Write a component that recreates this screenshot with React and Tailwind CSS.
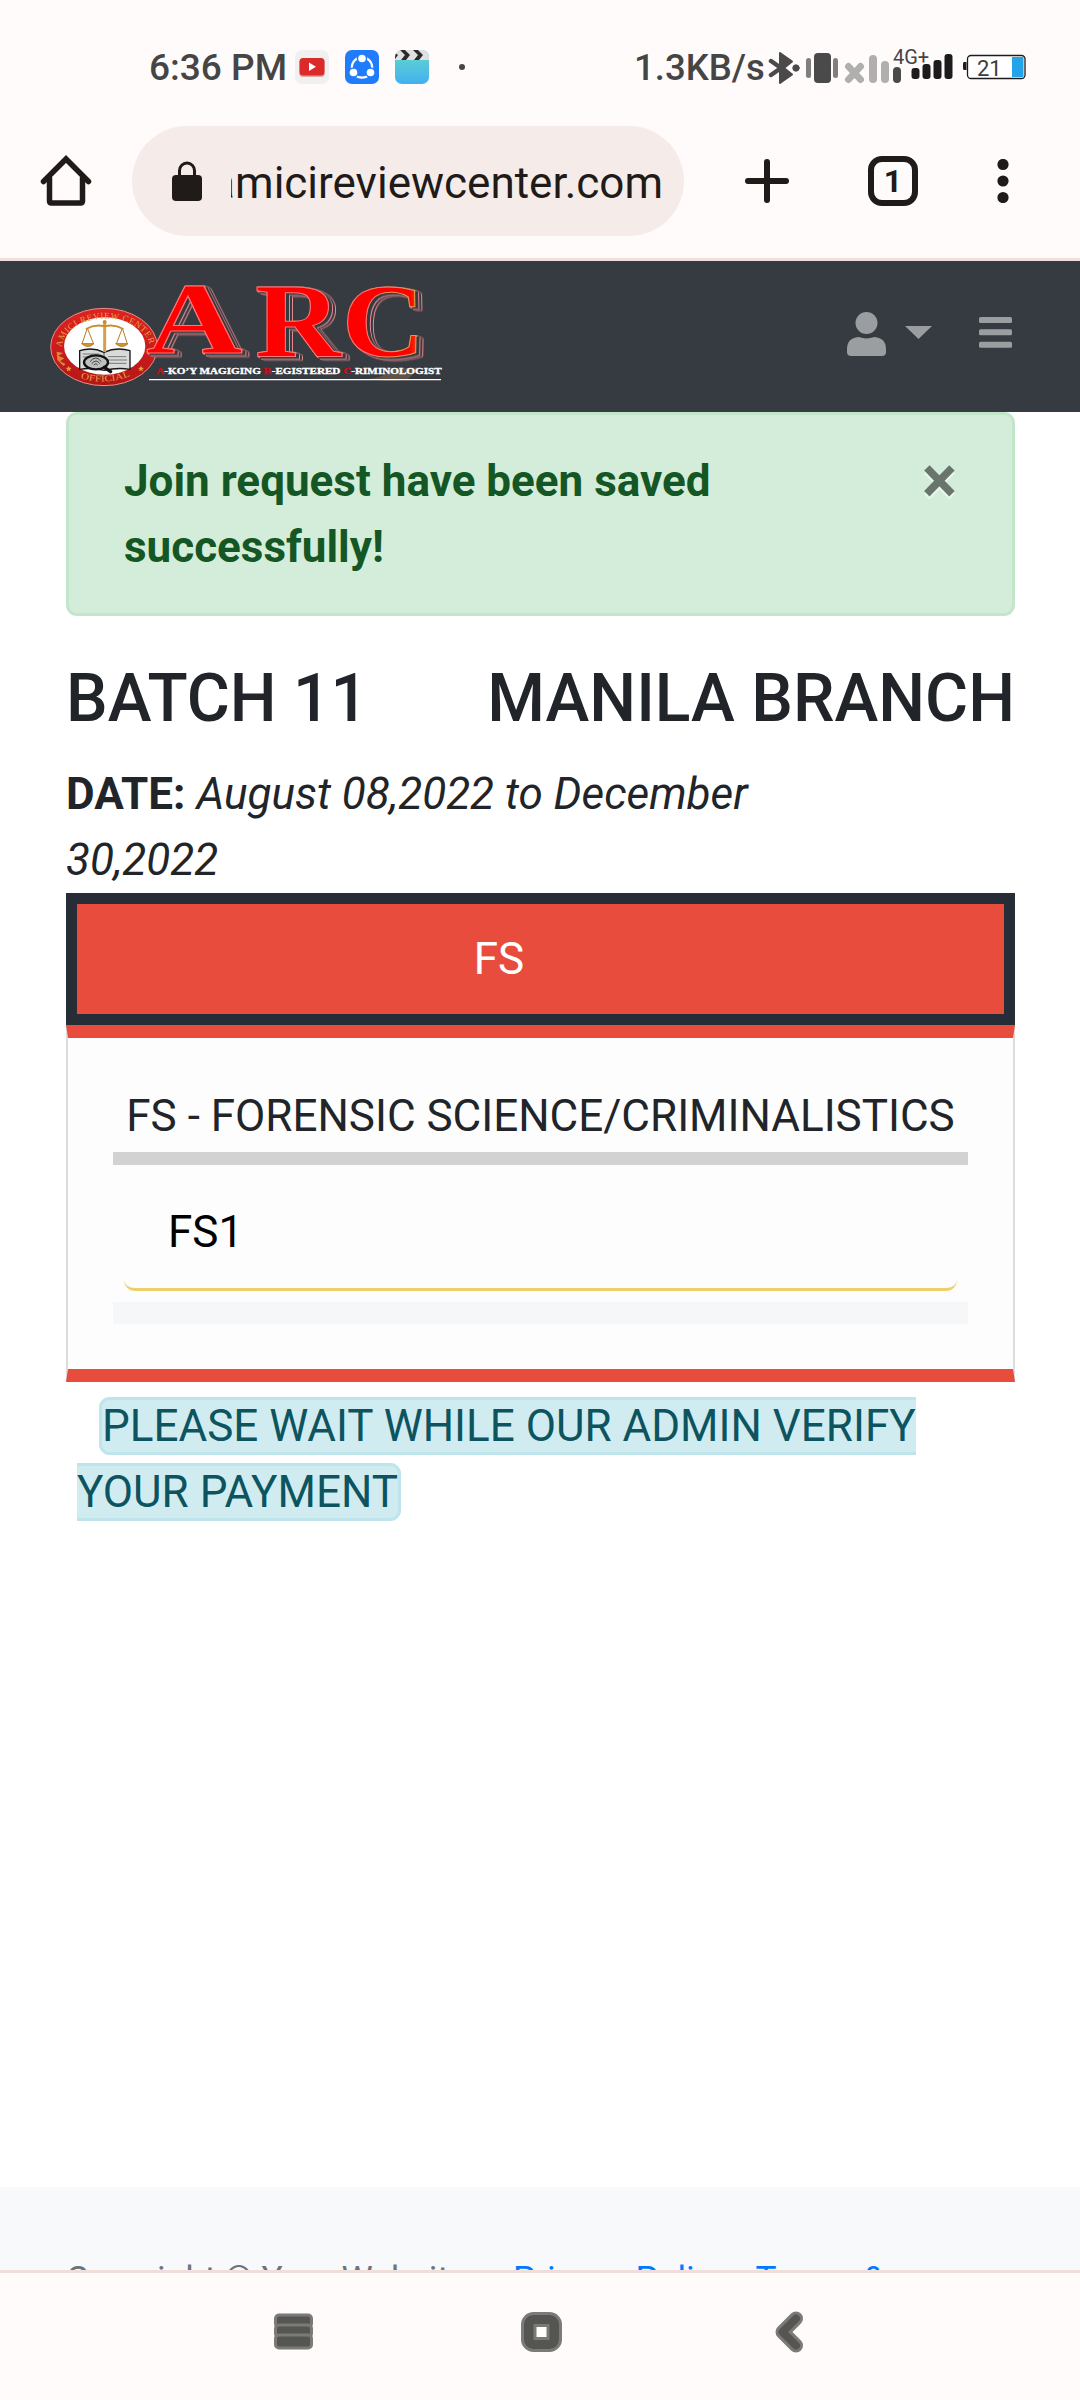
import React from "react";

function StatusBar() {
  return (
    <div className="flex h-[110px] shrink-0 items-start pt-[42px] text-[#454545]">
      <div className="ml-[149px] w-[146px] whitespace-nowrap text-[37px] font-medium leading-[52px]">6:36 PM</div>
      <svg className="mt-2 h-[34px] w-[34px]" viewBox="0 0 34 34">
        <rect width="34" height="34" rx="7" fill="#f1f0f0" />
        <rect x="4.5" y="9" width="25" height="18" rx="3.5" fill="#b3201f" opacity=".35" />
        <rect x="4.5" y="8" width="25" height="17.5" rx="3.5" fill="#db2a2a" />
        <path d="M14 12.5v8.500l7-4.300z" fill="#fff" />
      </svg>
      <svg className="ml-4 mt-2 h-[34px] w-[34px]" viewBox="0 0 34 34">
        <rect width="34" height="34" rx="7" fill="#217cfb" />
        <circle cx="17" cy="17.5" r="10.2" fill="none" stroke="#fff" strokeWidth="2.2" />
        <circle cx="17" cy="8.5" r="5.2" fill="#217cfb" />
        <circle cx="8.500" cy="22.500" r="5.2" fill="#217cfb" />
        <circle cx="25.500" cy="22.500" r="5.2" fill="#217cfb" />
        <circle cx="17" cy="8.500" r="3.800" fill="#fff" />
        <circle cx="8.500" cy="22.500" r="3.800" fill="#fff" />
        <circle cx="25.500" cy="22.500" r="3.800" fill="#fff" />
      </svg>
      <svg className="ml-4 mt-2 h-[34px] w-[34px]" viewBox="0 0 34 34">
        <defs>
          <linearGradient id="film" x2="0" y2="1"><stop stopColor="#66d8cb" /><stop offset="1" stopColor="#42b0ef" /></linearGradient>
          <clipPath id="clap"><rect width="34" height="34" rx="7" /></clipPath>
        </defs>
        <g clipPath="url(#clap)">
          <rect width="34" height="34" fill="url(#film)" />
          <rect width="34" height="10" fill="#e0e0e0" />
          <path d="M0 3l3 2-3 4zM5 0h5l5 5-4 5H6l4-5zM18 0h5l5 5-4 5h-5l4-5zM31 0h3v4z" fill="#2a2a2a" />
        </g>
      </svg>
      <svg className="ml-[30px] mt-[22px] h-[6px] w-[6px]" viewBox="0 0 6 6"><circle cx="3" cy="3" r="3" fill="#454545" /></svg>
      <div className="ml-[169px] w-[134px] whitespace-nowrap text-[36.5px] font-medium leading-[52px]">1.3KB/s</div>
      <svg className="mt-[7px] h-[38px] w-[262px] font-[Roboto]" viewBox="0 0 262 38">
        <g fill="#4a4a4a" stroke="#4a4a4a" strokeLinejoin="round" strokeLinecap="round">
          <path d="M12 4l12 8.500-8 6.500 8 6.500L12 34z" strokeWidth="2" />
          <path d="M3 12l10 7-10 7" strokeWidth="4.500" fill="none" />
          <circle cx="28" cy="19" r="3.200" strokeWidth="1" />
        </g>
        <g fill="#4a4a4a">
          <rect x="46" y="4" width="17" height="30" rx="4" />
          <rect x="38" y="9" width="5" height="20" rx="2.500" opacity=".7" />
          <rect x="65" y="9" width="5" height="20" rx="2.500" opacity=".7" />
        </g>
        <path d="M80.500 17.500l12 13m0-13l-12 13" stroke="#b0afad" strokeWidth="7" strokeLinecap="round" />
        <rect x="101" y="6" width="8" height="28" rx="4" fill="#b0afad" />
        <rect x="113" y="12" width="8" height="22" rx="4" fill="#b0afad" />
        <rect x="125" y="18" width="8" height="16" rx="4" fill="#4a4a4a" />
        <g fill="#1c1c1c">
          <rect x="143.500" y="19" width="8" height="11" rx="3" />
          <rect x="154.500" y="15" width="8" height="15" rx="3" />
          <rect x="165.500" y="11" width="8" height="19" rx="3" />
          <rect x="176.500" y="5" width="8" height="25" rx="3" />
          <path d="M198.500 13h-2.500q-1 0-1 2v4q0 2 1 2h2.500z" />
        </g>
        <text x="125" y="15" fontSize="20" fill="#454545">4G+</text>
        <rect x="199.500" y="6.500" width="57.500" height="23" rx="3.500" fill="#fff" stroke="#1c1c1c" strokeWidth="1.300" />
        <rect x="244" y="8" width="11.500" height="20" fill="#24a4e8" />
        <text x="209" y="26.500" fontSize="22" fill="#3c3c3c">21</text>
      </svg>
    </div>
  );
}

function BrowserBar() {
  return (
    <div className="flex h-[151px] shrink-0 items-start border-b-[3px] border-[#f1dfda] pt-4 text-[#201a19]">
      <svg className="ml-[38px] mt-[27px] h-14 w-14" viewBox="0 0 56 56" fill="none" stroke="currentColor" strokeWidth="5.500" strokeLinecap="round">
        <path d="M5.500 28.500L28 6l22.500 22.500" strokeLinejoin="miter" />
        <path d="M11.500 25v23q0 2 2 2h29q2 0 2-2V25" />
      </svg>
      <div className="ml-[38px] flex h-[110px] w-[552px] items-center rounded-full bg-[#f5ecea]">
        <svg className="ml-10 h-[40px] w-[30px]" viewBox="0 0 30 40">
          <rect y="14" width="30" height="26" rx="4" fill="currentColor" />
          <path d="M7.500 15V9.500a7.500 7.500 0 0 1 15 0V15" fill="none" stroke="currentColor" strokeWidth="3" />
        </svg>
        <div className="ml-[29px] flex w-[432px] justify-end overflow-hidden pt-[3px]">
          <span className="whitespace-nowrap text-[44px] leading-[60px]">amicireviewcenter.com</span>
        </div>
      </div>
      <svg className="ml-[61px] mt-[33px] h-11 w-11" viewBox="0 0 44 44"><path d="M22 3v38M3 22h38" stroke="currentColor" strokeWidth="6" strokeLinecap="round" /></svg>
      <div className="ml-[79px] mt-[30px] flex h-[50px] w-[50px] items-center justify-center rounded-[14px] border-[6px] border-[#201a19] text-[32px] font-bold leading-none">1</div>
      <svg className="ml-[79px] mt-[33px] h-11 w-3" viewBox="0 0 12 44" fill="currentColor"><circle cx="6" cy="5.500" r="5.600" /><circle cx="6" cy="22" r="5.600" /><circle cx="6" cy="38.500" r="5.600" /></svg>
    </div>
  );
}

const BIG_LETTERS = [
  { c: "A", x: 318, y: 278, w: 290, s: 304, fill: "#fe0000", stroke: "#ff7676" },
  { c: "R", x: 645, y: 287, w: 258, s: 316, fill: "#fe0000", stroke: "#ff7676" },
  { c: "C", x: 906, y: 288, w: 248, s: 308, fill: "url(#letterC)", stroke: "url(#edgeC)" },
];

function Logo() {
  return (
    <svg className="h-[150px] w-[420px]" viewBox="0 0 1260 450">
      <defs>
        <path id="ringTop" d="M66 262a128 84 0 0 1 262 0" />
        <path id="ringBottom" d="M118 353Q194 379 272 347" />
        <linearGradient id="red" x2="0" y2="1"><stop stopColor="#e02222" /><stop offset="1" stopColor="#b51616" /></linearGradient>
        <linearGradient id="letterC"><stop offset=".82" stopColor="#fe0000" /><stop offset="1" stopColor="#dc7a18" /></linearGradient>
        <linearGradient id="edgeC"><stop offset=".3" stopColor="#ff7676" /><stop offset=".7" stopColor="#e29a4c" /></linearGradient>
      </defs>
      <ellipse cx="192" cy="261" rx="160" ry="116" fill="url(#red)" stroke="#e98f88" strokeWidth="3" />
      <ellipse cx="194" cy="258" rx="122" ry="86" fill="#fff" />
      <g fill="#e3a043" fontFamily="Liberation Serif, serif" fontSize="27">
        <text><textPath href="#ringTop" textLength="335">AMICI REVIEW CENTER</textPath></text>
        <text><textPath href="#ringBottom" startOffset="4" textLength="152" lengthAdjust="spacingAndGlyphs">OFFICIAL</textPath></text>
      </g>
      <g fill="#e3a043"><path d="M50 275l20 4-15 8 18 8-13 9 17 8-7 6-18-18z" opacity=".8" /><path d="M86 318l3 5 6 1-5 4 1 6-5-3-5 3 1-6-5-4 6-1zM303 318l3 5 6 1-5 4 1 6-5-3-5 3 1-6-5-4 6-1z" /></g>
      <g stroke="#171717" strokeWidth="4" fill="#d8dada" strokeLinejoin="round">
        <path d="M119 272q38-12 73 5 38-17 78-5v56q-38-6-77 3-37-9-74-3z" />
        <path d="M192 278v48" strokeWidth="2" />
        <path d="M204 290h54M204 300h57M204 310h55M128 282h50M128 291h20" stroke="#777" strokeWidth="3" />
      </g>
      <g stroke="#b77c25" fill="none" strokeWidth="3">
        <path d="M194 184v92" stroke="#d6a04a" strokeWidth="9" />
        <path d="M138 207q28-16 56-8 28-8 56 8" stroke="#c88d32" strokeWidth="6" />
        <path d="M141 207l-15 45M143 207l18 45M246 207l-17 45M248 207l14 45" />
        <path d="M125 251h37q-18 17-37 0M227 251h37q-18 17-37 0" fill="#d69935" />
      </g>
      <circle cx="194" cy="186" r="6" fill="#c88d32" />
      <ellipse cx="168" cy="307" rx="36" ry="21" fill="#bcc0c0" stroke="#111" strokeWidth="7" />
      <path d="M150 305q17-22 34 0M155 311q14-16 24 0M161 315q7-8 12 0" fill="none" stroke="#444" strokeWidth="3" />
      <path d="M193 322l19 13" stroke="#111" strokeWidth="10" strokeLinecap="round" />
      <g className="[filter:drop-shadow(9px_5px_0_#363a41)_drop-shadow(3px_2px_0_#e98b8e)_drop-shadow(6px_2px_0_#363a41)_drop-shadow(3px_1px_0_#e98b8e)]" fontFamily="Liberation Serif, serif" fontWeight="700">
        {BIG_LETTERS.map((l) => (
          <text key={l.c} x={l.x} y={l.y} fontSize={l.s} textLength={l.w} lengthAdjust="spacingAndGlyphs" fill={l.fill} stroke={l.stroke} strokeWidth="3">{l.c}</text>
        ))}
      </g>
      <path d="M985 357q45-2 70-30l85-5-35 34q-40 12-120 1z" fill="#9a7b4e" opacity=".4" />
      <text x="349" y="342" fontFamily="Liberation Serif, serif" fontWeight="700" fontSize="27" textLength="856" lengthAdjust="spacingAndGlyphs" fill="#fff" stroke="#fff" strokeWidth="1">
        <tspan fill="#cf0d12" stroke="#cf0d12">A</tspan>-KO’Y MAGIGING <tspan fill="#cf0d12" stroke="#cf0d12">R</tspan>-EGISTERED <tspan fill="#cf0d12" stroke="#cf0d12">C</tspan>-RIMINOLOGIST
      </text>
      <path d="M327 359h876" stroke="#fff" strokeWidth="4" />
    </svg>
  );
}

function Navbar() {
  return (
    <nav className="flex h-[151px] shrink-0 items-start bg-[#363a41] text-[#9b9ea1]">
      <div className="-mt-px ml-10 flex h-[150px] w-[420px]"><Logo /></div>
      <svg className="ml-[387px] mt-[51px] h-11 w-[39px]" viewBox="0 0 39 44" fill="currentColor">
        <circle cx="19.500" cy="11" r="11" />
        <path d="M11.500 25q8 2.800 16 0 11.500 1 11.500 12v3q0 4-4 4H4q-4 0-4-4v-3q0-11 11.500-12z" />
      </svg>
      <svg className="ml-[19px] mt-[65px] h-[13px] w-[27px]" viewBox="0 0 27 13" fill="currentColor"><path d="M0 0h27L13.500 13z" /></svg>
      <svg className="ml-[47px] mt-[56px] h-[31px] w-[33px]" viewBox="0 0 33 31" fill="currentColor">
        <rect width="33" height="6" rx="1.500" /><rect y="12.300" width="33" height="6" rx="1.500" /><rect y="24.700" width="33" height="6" rx="1.500" />
      </svg>
    </nav>
  );
}

function Content() {
  return (
    <main className="flex-1 overflow-hidden pl-[66px] pr-[65px] text-[44px] leading-[66px] text-[#212529]">
      <div className="flex h-[204px] justify-between rounded-[11px] border-[3px] border-[#c3e6cb] bg-[#d4edda] pl-[55px] pr-[55px] pt-[33px] text-[#155724]">
        <strong className="w-[640px] font-bold">Join request have been saved successfully!</strong>
        <button className="flex h-[66px] items-center text-[66px] font-bold leading-[66px] text-black opacity-50 [text-shadow:0_3px_0_#fff]">×</button>
      </div>
      <div className="mt-[43px] flex justify-between text-[66px] font-medium leading-[79px]">
        <h4>BATCH 11</h4>
        <h4>MANILA BRANCH</h4>
      </div>
      <div className="mt-[23px] w-[780px]"><b>DATE:</b> <i>August 08,2022 to December 30,2022</i></div>
      <div className="flex h-[132px] items-center justify-center border-[11px] border-[#272d37] bg-[#e84c3d] pr-[83px] text-white">FS</div>
      <section className="h-[357px] border-x-2 border-y-[13px] border-x-[#dcdcdc] border-y-[#e84c3d] bg-[#fdfdfd] px-[45px] pt-[45px]">
        <div className="whitespace-nowrap text-center">FS - FORENSIC SCIENCE/CRIMINALISTICS</div>
        <div className="mt-[3px] h-[13px] bg-[#d2d2d2]" />
        <div className="mx-[11px] mt-[22px] rounded-[11px] border-b-[3px] border-[#edcf6c] pb-[23px] pl-[44px] pt-3 text-black">FS1</div>
        <div className="mt-[11px] h-[22px] bg-[#f6f7f9]" />
      </section>
      <p className="ml-[11px] mt-[11px]">
        <span className="ml-[22px] whitespace-nowrap rounded-[11px] border-[3px] border-[#bee5eb] bg-[#d1ecf1] text-[#0c5460]">PLEASE WAIT WHILE OUR ADMIN VERIFY<br />YOUR PAYMENT</span>
      </p>
    </main>
  );
}

function Footer() {
  return (
    <footer className="flex h-[83px] shrink-0 items-start overflow-hidden bg-[#f8f9fb] px-[66px] pt-[66px] text-[35.2px] leading-[53px] text-[#6c757d]">
      <div className="w-[447px] whitespace-nowrap">Copyright © Your Website</div>
      <div className="whitespace-nowrap"><a className="text-[#007bff]">Privacy Policy</a> · <a className="text-[#007bff]">Terms &amp;</a></div>
    </footer>
  );
}

function SystemNav() {
  return (
    <div className="flex h-[130px] shrink-0 items-start border-t-[3px] border-[#f1dedb] bg-[#fffbfa] pt-[38px]">
      <svg className="ml-[273px] h-[42px] w-[42px]" viewBox="0 0 42 42" fill="#555551" stroke="#7b7a77" strokeWidth="3">
        <rect x="2.500" y="4" width="36" height="12" rx="3.500" /><rect x="2.500" y="14" width="36" height="12" rx="3.500" /><rect x="2.500" y="24" width="36" height="13" rx="3.500" />
      </svg>
      <svg className="ml-[206px] h-[42px] w-[42px]" viewBox="0 0 42 42">
        <rect x="1.500" y="2.500" width="38" height="37" rx="11" fill="#555551" stroke="#7b7a77" strokeWidth="3" />
        <rect x="14" y="14.500" width="13" height="13" fill="#fff" stroke="#7b7a77" strokeWidth="3" />
      </svg>
      <svg className="ml-[209px] h-[42px] w-[34px]" viewBox="0 0 34 42" fill="none" strokeLinecap="round" strokeLinejoin="round">
        <path d="M24 7.500L10.500 21 24 34.500" stroke="#7b7a77" strokeWidth="14" />
        <path d="M24 7.500L10.500 21 24 34.500" stroke="#555551" strokeWidth="8" />
      </svg>
    </div>
  );
}

export default function App() {
  return (
    <div className="flex h-[2400px] w-[1080px] flex-col overflow-hidden bg-white font-[Roboto,sans-serif]">
      <div className="shrink-0 bg-[#fffbfa]">
        <StatusBar />
        <BrowserBar />
      </div>
      <Navbar />
      <Content />
      <Footer />
      <SystemNav />
    </div>
  );
}
